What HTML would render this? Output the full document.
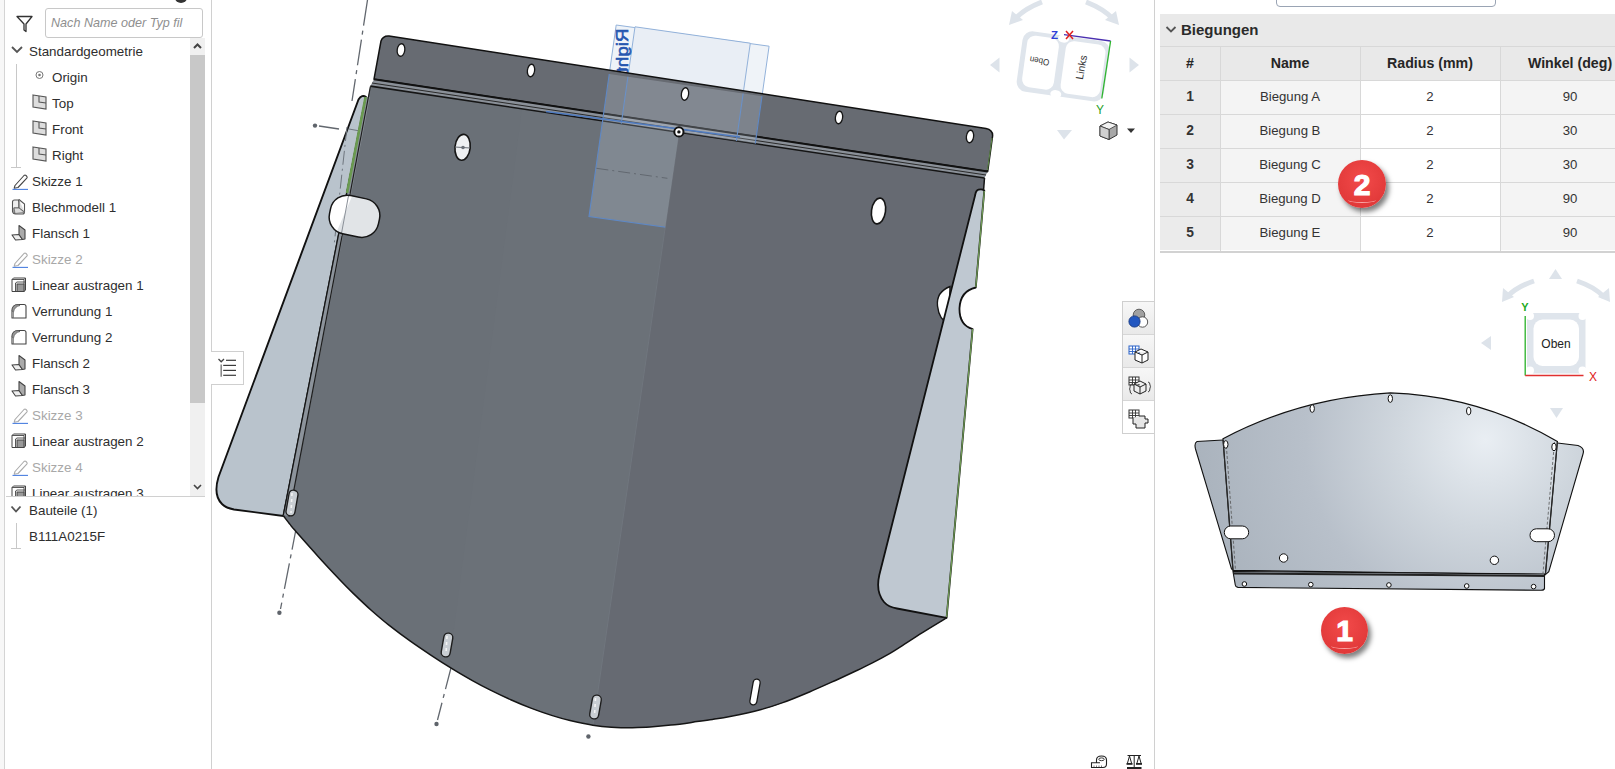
<!DOCTYPE html>
<html><head><meta charset="utf-8">
<style>
*{box-sizing:border-box;margin:0;padding:0}
html,body{width:1615px;height:769px;overflow:hidden;background:#fff;font-family:"Liberation Sans",sans-serif;color:#333}
.abs{position:absolute}
#lstrip{left:0;top:0;width:5px;height:769px;background:#f7f7f7;border-right:1px solid #d4d4d4}
#lpanel{left:6px;top:0;width:205px;height:769px;background:#fff}
#lborder{left:211px;top:0;width:1px;height:769px;background:#d0d0d0}
.row{position:absolute;left:0;height:26px;font-size:13.4px;line-height:28px;color:#2e2e2e;white-space:nowrap}
.row.dim{color:#a8a8a8}
.ico{position:absolute}
#search{left:45px;top:8px;width:158px;height:30px;border:1px solid #c8c8c8;border-radius:3px;font-style:italic;color:#8f8f8f;font-size:12.6px;line-height:29px;padding-left:5px;white-space:nowrap;overflow:hidden}
#sbar{left:190px;top:38px;width:15px;height:458px;background:#f0f0f0}
#sthumb{left:190px;top:55px;width:15px;height:348px;background:#c8c8c8}
#rborder{left:1154px;top:0;width:1px;height:769px;background:#d0d0d0}
table{border-collapse:collapse}
.tb{position:absolute;left:1160px;top:46px;border-collapse:collapse;font-size:13px}
.tb td{height:34px;border:1px solid #dcdcdc;text-align:center;color:#333}
.tb th{height:34px;border:1px solid #d6d6d6;background:#e8e8e8;font-weight:bold;font-size:13.6px;color:#262626}
.badge{position:absolute;border-radius:50%;-webkit-text-stroke:1.2px #fff;background:radial-gradient(circle at 50% 40%,#f24a4a,#e23a3a 70%,#d83434);box-shadow:3px 4px 5px rgba(0,0,0,.5);color:#fff;font-weight:bold;text-align:center}
</style></head>
<body>
<div id="lstrip" class="abs"></div>
<div id="lpanel" class="abs"></div>
<div id="lborder" class="abs"></div>

<!-- funnel -->
<svg class="abs" style="left:15px;top:14px" width="20" height="20" viewBox="0 0 20 20"><path d="M2,2.5 L17,2.5 L11,10 L11,17.5 L9,16 L9,10 Z" fill="none" stroke="#333" stroke-width="1.3" stroke-linejoin="round"/></svg>
<div id="search" class="abs">Nach Name oder Typ fil</div>
<div class="abs" style="left:175px;top:-7px;width:12px;height:10px;border-radius:50%;background:#333"></div>

<div id="sbar" class="abs"></div>
<div id="sthumb" class="abs"></div>
<svg class="abs" style="left:190px;top:38px" width="15" height="17"><path d="M4,10 L7.5,6.5 L11,10" fill="none" stroke="#444" stroke-width="2"/></svg>
<svg class="abs" style="left:190px;top:478px" width="15" height="17"><path d="M4,7 L7.5,10.5 L11,7" fill="none" stroke="#444" stroke-width="1.6"/></svg>

<div class="abs" style="left:6px;top:38px;width:184px;height:458px;overflow:hidden">
  <!-- tree -->
  <svg class="ico" style="left:4px;top:7px" width="14" height="10"><path d="M2,2 L7,7 L12,2" fill="none" stroke="#555" stroke-width="1.8"/></svg>
  <div class="row" style="left:23px;top:0">Standardgeometrie</div>
  <div class="ico" style="left:10px;top:26px;width:1px;height:104px;background:#c8c8c8"></div>
  <div class="ico" style="left:5px;top:129px;width:10px;height:1px;background:#c8c8c8"></div>
  <svg class="ico" style="left:29px;top:32px" width="10" height="10"><circle cx="4.5" cy="5" r="3.5" fill="none" stroke="#777" stroke-width="1"/><circle cx="4.5" cy="5" r="1.3" fill="#777"/></svg>
  <div class="row" style="left:46px;top:26px">Origin</div>
  <svg class="ico" style="left:26px;top:56px" width="16" height="16"><path d="M1,1 L14,3 L14,15 L1,13 Z" fill="#ddd" stroke="#555" stroke-width="1.1"/><path d="M7,2 L7,8 L14,9" fill="none" stroke="#555" stroke-width="1.1"/></svg>
  <div class="row" style="left:46px;top:52px">Top</div>
  <svg class="ico" style="left:26px;top:82px" width="16" height="16"><path d="M1,1 L14,3 L14,15 L1,13 Z" fill="#ddd" stroke="#555" stroke-width="1.1"/><path d="M7,2 L7,8 L14,9" fill="none" stroke="#555" stroke-width="1.1"/></svg>
  <div class="row" style="left:46px;top:78px">Front</div>
  <svg class="ico" style="left:26px;top:108px" width="16" height="16"><path d="M1,1 L14,3 L14,15 L1,13 Z" fill="#ddd" stroke="#555" stroke-width="1.1"/><path d="M7,2 L7,8 L14,9" fill="none" stroke="#555" stroke-width="1.1"/></svg>
  <div class="row" style="left:46px;top:104px">Right</div>

  <!-- features -->
<div class="row" style="left:26px;top:130px">Skizze 1</div>
<div class="row" style="left:26px;top:156px">Blechmodell 1</div>
<div class="row" style="left:26px;top:182px">Flansch 1</div>
<div class="row dim" style="left:26px;top:208px">Skizze 2</div>
<div class="row" style="left:26px;top:234px">Linear austragen 1</div>
<div class="row" style="left:26px;top:260px">Verrundung 1</div>
<div class="row" style="left:26px;top:286px">Verrundung 2</div>
<div class="row" style="left:26px;top:312px">Flansch 2</div>
<div class="row" style="left:26px;top:338px">Flansch 3</div>
<div class="row dim" style="left:26px;top:364px">Skizze 3</div>
<div class="row" style="left:26px;top:390px">Linear austragen 2</div>
<div class="row dim" style="left:26px;top:416px">Skizze 4</div>
<div class="row" style="left:26px;top:442px">Linear austragen 3</div>
</div>

<svg class="abs" style="left:6px;top:38px" width="184" height="458" viewBox="6 38 184 458">
<defs>
<symbol id="i-sk" viewBox="0 0 18 18"><path d="M4,13.5 L13,3.5 Q14,2.6 15,3.5 L15.8,4.3 Q16.6,5.3 15.8,6.2 L7,15.5 L3.2,16.2 Z" fill="none" stroke="currentColor" stroke-width="1.1" stroke-linejoin="round"/><line x1="1.5" y1="17.4" x2="17" y2="17.4" stroke="#4a7fe0" stroke-width="1.1"/></symbol>
<symbol id="i-bm" viewBox="0 0 18 18"><path d="M2.5,4 Q2.5,2 4.5,2 L8.5,2 L9,4.5 L9,10 L4,10 L4,14 Q4,15.5 5.5,15.5" fill="#eee" stroke="#555" stroke-width="1.1"/><path d="M9,1.5 L14.5,6 L14.5,14 Q14.5,16 12.5,16 L5.5,16 Q3,16 2.5,13.5 L2.5,4" fill="none" stroke="#555" stroke-width="1.1"/><path d="M9,1.5 L9,10 L14.5,14" fill="#ddd" stroke="#555" stroke-width="1"/><path d="M4,10 L9,10 L14.5,14.5 L5,15.5 Z" fill="#dcdcdc" stroke="#666" stroke-width="0.8"/></symbol>
<symbol id="i-fl" viewBox="0 0 18 18"><path d="M2,11.5 L9,11 L12.5,16 L5.5,16.5 Z" fill="#eee" stroke="#444" stroke-width="1.1" stroke-linejoin="round"/><path d="M9,11 L9,2 L15,6.5 L15,15.5 L12.5,16 Z" fill="#aaa" stroke="#444" stroke-width="1.1" stroke-linejoin="round"/></symbol>
<symbol id="i-la" viewBox="0 0 18 18"><path d="M2,3.5 L3.5,2 L15.5,2 L15.5,14 L14,15.5 L2,15.5 Z" fill="#fff" stroke="#444" stroke-width="1"/><path d="M2,3.5 L14,3.5 L15.5,2 M14,3.5 L14,15.5" fill="none" stroke="#444" stroke-width="0.9"/><rect x="7" y="8" width="7" height="7.5" fill="#999" stroke="#444" stroke-width="1"/><path d="M5.5,15.5 L5.5,7 L7,6 L15.5,6" fill="none" stroke="#444" stroke-width="0.9"/></symbol>
<symbol id="i-vr" viewBox="0 0 18 18"><path d="M2,16 L2,9 Q2,2.5 8.5,2.5 L14,2.5 Q16,2.5 16,4.5 L16,16 Z" fill="#fff" stroke="#444" stroke-width="1.1" stroke-linejoin="round"/><path d="M2,9 Q2,2.5 8.5,2.5 L10,3.5 Q4.5,4.5 3.5,10 Z" fill="#999" stroke="#555" stroke-width="0.7"/><path d="M3.5,10 L3.5,16" stroke="#666" stroke-width="0.7"/></symbol>
</defs>
<use href="#i-sk" x="11" y="172" width="18" height="18" color="#444"/>
<use href="#i-bm" x="10" y="198" width="18" height="18"/>
<use href="#i-fl" x="10" y="223.5" width="18" height="18"/>
<use href="#i-sk" x="11" y="250" width="18" height="18" color="#aaa"/>
<use href="#i-la" x="10" y="276" width="18" height="18"/>
<use href="#i-vr" x="10" y="302" width="18" height="18"/>
<use href="#i-vr" x="10" y="328" width="18" height="18"/>
<use href="#i-fl" x="10" y="353.5" width="18" height="18"/>
<use href="#i-fl" x="10" y="379.5" width="18" height="18"/>
<use href="#i-sk" x="11" y="406" width="18" height="18" color="#aaa"/>
<use href="#i-la" x="10" y="432" width="18" height="18"/>
<use href="#i-sk" x="11" y="458" width="18" height="18" color="#aaa"/>
<use href="#i-la" x="10" y="484" width="18" height="18"/>
</svg>
<div class="abs" style="left:6px;top:496px;width:199px;height:1px;background:#d0d0d0"></div>
<svg class="abs" style="left:10px;top:505px" width="14" height="10"><path d="M1.5,1.5 L6,6.5 L10.5,1.5" fill="none" stroke="#555" stroke-width="1.8"/></svg>
<div class="row" style="left:29px;top:497px">Bauteile (1)</div>
<div class="abs" style="left:16px;top:523px;width:1px;height:26px;background:#c8c8c8"></div>
<div class="abs" style="left:11px;top:548px;width:10px;height:1px;background:#c8c8c8"></div>
<div class="row" style="left:29px;top:523px">B111A0215F</div>

<!-- list toggle -->
<div class="abs" style="left:211px;top:351px;width:33px;height:34px;background:#fff;border:1px solid #cfcfcf;border-left:none"></div>
<svg class="abs" style="left:212px;top:352px" width="31" height="32" viewBox="212 352 31 32"><path d="M218.5,359 L221.2,361.8 L224,359" fill="none" stroke="#444" stroke-width="1.3"/><line x1="221.2" y1="364.5" x2="221.2" y2="376.8" stroke="#8a8a8a" stroke-width="1.6"/><g stroke="#3a3a3a" stroke-width="1.2"><line x1="226" y1="360.3" x2="236" y2="360.3"/><line x1="223.2" y1="365.4" x2="236" y2="365.4"/><line x1="223.2" y1="370.4" x2="236" y2="370.4"/><line x1="223.2" y1="375.3" x2="236" y2="375.3"/></g></svg>


<svg width="943" height="769" viewBox="212 0 943 769" style="position:absolute;left:212px;top:0">
<defs><clipPath id="cp3"><path d="M381,41 L986,128.5 L992.6,136 L984.5,178 L370.4,86.1 Z"/></clipPath><clipPath id="cp2"><path d="M381,41 L986,128.5 L992.6,136 L984.5,178 L370.4,86.1 Z"/><path d="M370.4,86.1 L679,132.3 L593,725.2 L593.0,725.2 C593.0,725.2 596.7,726.0 592.9,725.2 C589.1,724.4 576.8,722.1 570.0,720.5 C563.2,718.9 558.8,717.6 552.4,715.6 C546.0,713.6 538.5,711.1 531.6,708.4 C524.7,705.8 517.7,702.9 510.8,699.8 C503.9,696.7 496.4,693.1 490.0,689.9 C483.6,686.7 478.8,684.2 472.4,680.6 C466.0,677.0 458.5,672.7 451.6,668.4 C444.7,664.2 437.7,659.7 430.8,655.1 C423.9,650.5 417.0,645.9 410.0,640.9 C403.0,635.9 395.4,630.2 388.9,625.1 C382.4,620.0 377.1,615.4 371.2,610.2 C365.3,604.9 358.7,598.6 353.5,593.6 C348.3,588.5 345.9,586.1 340.0,579.9 C334.1,573.7 325.8,564.9 318.1,556.4 C310.4,548.0 298.7,534.6 294.0,529.3 C289.3,523.9 291.8,526.6 290.0,524.4 C288.2,522.2 284.6,517.4 283.5,516.0 Z"/></clipPath></defs>
<g stroke="#62676e" stroke-width="1.3" fill="none" stroke-dasharray="26,5,4,5">
<line x1="367.5" y1="0" x2="352" y2="101"/>
<line x1="297" y1="524" x2="280.5" y2="609"/>
<line x1="452" y1="664" x2="437.5" y2="720"/>
<line x1="339" y1="129" x2="319" y2="126"/>
</g>
<g fill="#5f646b"><circle cx="315" cy="125.6" r="2.2"/><circle cx="279.4" cy="612.7" r="2.2"/><circle cx="436.5" cy="724" r="2.2"/><circle cx="588.4" cy="736.5" r="2.2"/></g>
<!-- plane behind -->
<path d="M616.2,25 L769.1,46.2 L741.9,237.8 L589,216.6 Z" fill="#eff3f8" stroke="#93b2da" stroke-width="1"/>
<path d="M635,26.8 L750.3,43.2 L722.9,236.0 L607.8,218.6 Z" fill="#e9eef5" stroke="#93b2da" stroke-width="1"/>
<text transform="translate(628,28.5) rotate(90) scale(1,-1)" font-family="Liberation Sans" font-size="17" textLength="44" lengthAdjust="spacingAndGlyphs" fill="#2657b0" stroke="#2657b0" stroke-width="0.6">Right</text>
<!-- left flange -->
<path d="M366,97 Q362,94 358.5,99.5 L218.5,477 Q213,495 222,504 Q226,508 234,509.5 L283.5,516 Z" fill="#b9c3cc" stroke="#111" stroke-width="1.9" stroke-linejoin="round"/>
<line x1="362" y1="112" x2="286" y2="514" stroke="#8d949c" stroke-width="1"/>
<line x1="347" y1="127" x2="334" y2="246" stroke="#6f767e" stroke-width="1" stroke-dasharray="14,4,2,4"/><line x1="349" y1="129" x2="360" y2="131" stroke="#6f767e" stroke-width="1"/>
<!-- plate -->
<path d="M370.4,86.1 L984.5,178 L946.6,617.9 L946.6,617.9 C942.4,620.5 929.2,628.4 921.6,633.2 C914.0,638.0 906.1,643.3 900.8,646.6 C895.5,650.0 894.7,650.6 890.0,653.3 C885.3,656.0 877.9,660.0 872.4,662.8 C866.9,665.7 862.9,667.6 856.8,670.5 C850.7,673.4 843.8,676.6 836.0,680.2 C828.2,683.7 819.0,687.9 810.0,691.7 C801.0,695.5 790.1,700.0 782.0,702.9 C773.9,705.9 769.9,707.2 761.2,709.4 C752.5,711.7 738.1,714.8 730.0,716.4 C721.9,718.1 718.8,718.4 712.4,719.4 C706.0,720.4 698.5,721.4 691.6,722.4 C684.7,723.4 677.7,724.4 670.8,725.1 C663.9,725.9 656.4,726.6 650.0,727.1 C643.6,727.5 638.8,727.6 632.4,727.7 C626.0,727.7 618.2,727.6 611.6,727.2 C605.0,726.8 599.8,726.3 592.9,725.2 C586.0,724.1 576.8,722.1 570.0,720.5 C563.2,718.9 558.8,717.6 552.4,715.6 C546.0,713.6 538.5,711.1 531.6,708.4 C524.7,705.8 517.7,702.9 510.8,699.8 C503.9,696.7 496.4,693.1 490.0,689.9 C483.6,686.7 478.8,684.2 472.4,680.6 C466.0,677.0 458.5,672.7 451.6,668.4 C444.7,664.2 437.7,659.7 430.8,655.1 C423.9,650.5 417.0,645.9 410.0,640.9 C403.0,635.9 395.4,630.2 388.9,625.1 C382.4,620.0 377.1,615.4 371.2,610.2 C365.3,604.9 358.7,598.6 353.5,593.6 C348.3,588.5 345.9,586.1 340.0,579.9 C334.1,573.7 325.8,564.9 318.1,556.4 C310.4,548.0 298.7,534.6 294.0,529.3 C289.3,523.9 291.8,526.6 290.0,524.4 C288.2,522.2 284.6,517.4 283.5,516.0 Z" fill="#6a7077"/>
<path d="M522,108.8 L679,132.3 L593,725.2 L593.0,725.2 C593.0,725.2 596.7,726.0 592.9,725.2 C589.1,724.4 576.8,722.1 570.0,720.5 C563.2,718.9 558.8,717.6 552.4,715.6 C546.0,713.6 538.5,711.1 531.6,708.4 C524.7,705.8 517.7,702.9 510.8,699.8 C503.9,696.7 496.4,693.1 490.0,689.9 C483.6,686.7 478.8,684.2 472.4,680.6 C466.0,677.0 455.5,670.7 451.6,668.4 C447.7,666.1 449.4,667.0 449.0,666.7 Z" fill="#6b7178"/>
<path d="M679,132.3 L984.5,178 L946.6,617.9 L946.6,617.9 C942.4,620.5 929.2,628.4 921.6,633.2 C914.0,638.0 906.1,643.3 900.8,646.6 C895.5,650.0 894.7,650.6 890.0,653.3 C885.3,656.0 877.9,660.0 872.4,662.8 C866.9,665.7 862.9,667.6 856.8,670.5 C850.7,673.4 843.8,676.6 836.0,680.2 C828.2,683.7 819.0,687.9 810.0,691.7 C801.0,695.5 790.1,700.0 782.0,702.9 C773.9,705.9 769.9,707.2 761.2,709.4 C752.5,711.7 738.1,714.8 730.0,716.4 C721.9,718.1 718.8,718.4 712.4,719.4 C706.0,720.4 698.5,721.4 691.6,722.4 C684.7,723.4 677.7,724.4 670.8,725.1 C663.9,725.9 656.4,726.6 650.0,727.1 C643.6,727.5 638.8,727.6 632.4,727.7 C626.0,727.7 618.2,727.6 611.6,727.2 C605.0,726.8 596.1,725.5 593.0,725.2 Z" fill="#666a72"/>
<line x1="679" y1="132.3" x2="593" y2="725.2" stroke="#70767e" stroke-width="1"/>
<!-- flange & bend -->
<path d="M381,41 Q383,35.5 389,36 L986,128.5 Q993,130 992.6,136 L987.7,171.5 L374,79.2 Z" fill="#676b72" stroke="#111" stroke-width="1.5" stroke-linejoin="round"/>
<path d="M374,79.2 L987.7,171.5 L984.5,178 L370.4,86.1 Z" fill="#8a9098"/>
<line x1="374" y1="79.2" x2="987.7" y2="171.5" stroke="#111" stroke-width="2"/>
<line x1="372" y1="83" x2="986" y2="175" stroke="#2a2a2a" stroke-width="1"/>
<line x1="370.4" y1="86.1" x2="984.5" y2="178" stroke="#151515" stroke-width="1.6"/>
<!-- plane overlay -->
<g clip-path="url(#cp2)">
<path d="M616.2,25 L769.1,46.2 L741.9,237.8 L589,216.6 Z" fill="rgba(215,228,245,0.2)" stroke="#5f88c4" stroke-width="1.1"/>
</g>
<g clip-path="url(#cp3)">
<path d="M635,26.8 L750.3,43.2 L722.9,236.0 L607.8,218.6 Z" fill="rgba(215,228,245,0.06)" stroke="#6a90c6" stroke-width="1.1"/>
</g>
<line x1="546" y1="111.5" x2="740" y2="137" stroke="#4f7bc0" stroke-width="1.3"/>
<line x1="596.4" y1="168.3" x2="667.4" y2="178.3" stroke="#626870" stroke-width="1" stroke-dasharray="12,4,2,4"/>
<!-- left plate edge lines -->
<path d="M365.6,97 L369.8,97 L288.8,516.6 L283.3,514.8 Z" fill="#8c939b"/><line x1="365.6" y1="97" x2="283.3" y2="515" stroke="#151515" stroke-width="1.3"/><line x1="370.4" y1="86.5" x2="288.8" y2="516.6" stroke="#1e1e1e" stroke-width="1.2"/>
<line x1="365.6" y1="97" x2="347" y2="193" stroke="#6a9a50" stroke-width="2.6"/>
<!-- right flange -->
<path d="M950,286.5 Q936,292 937.5,306 Q939,320 949,324 Z" fill="#fff" stroke="#151515" stroke-width="1.4"/><path d="M976,286 Q958,292 959.5,308 Q961,325 973,330 L990,330 L990,286 Z" fill="#fff"/>
<path d="M984.3,190.5 Q983,189 978.5,189.6 Q975.8,190.5 975.2,195 L879.3,575 Q875.5,592 884,602 Q888.5,607.2 897,608.5 L946.6,617.9 L972.6,329 Q959,325 959.5,308 Q960.5,291 975.8,287.5 Z" fill="#bfc8d1" stroke="#111" stroke-width="1.8" stroke-linejoin="round"/>
<line x1="984.3" y1="191" x2="975.8" y2="287" stroke="#6f9a55" stroke-width="1.3"/>
<line x1="972.6" y1="329" x2="946.6" y2="617" stroke="#6f9a55" stroke-width="1.3"/>
<line x1="984.5" y1="178" x2="983.5" y2="191" stroke="#151515" stroke-width="1.5"/><line x1="992" y1="138" x2="987.5" y2="170" stroke="#6a9a50" stroke-width="0.9"/>
<path d="M946.6,617.9 L946.6,617.9 C942.4,620.5 929.2,628.4 921.6,633.2 C914.0,638.0 906.1,643.3 900.8,646.6 C895.5,650.0 894.7,650.6 890.0,653.3 C885.3,656.0 877.9,660.0 872.4,662.8 C866.9,665.7 862.9,667.6 856.8,670.5 C850.7,673.4 843.8,676.6 836.0,680.2 C828.2,683.7 819.0,687.9 810.0,691.7 C801.0,695.5 790.1,700.0 782.0,702.9 C773.9,705.9 769.9,707.2 761.2,709.4 C752.5,711.7 738.1,714.8 730.0,716.4 C721.9,718.1 718.8,718.4 712.4,719.4 C706.0,720.4 698.5,721.4 691.6,722.4 C684.7,723.4 677.7,724.4 670.8,725.1 C663.9,725.9 656.4,726.6 650.0,727.1 C643.6,727.5 638.8,727.6 632.4,727.7 C626.0,727.7 618.2,727.6 611.6,727.2 C605.0,726.8 599.8,726.3 592.9,725.2 C586.0,724.1 576.8,722.1 570.0,720.5 C563.2,718.9 558.8,717.6 552.4,715.6 C546.0,713.6 538.5,711.1 531.6,708.4 C524.7,705.8 517.7,702.9 510.8,699.8 C503.9,696.7 496.4,693.1 490.0,689.9 C483.6,686.7 478.8,684.2 472.4,680.6 C466.0,677.0 458.5,672.7 451.6,668.4 C444.7,664.2 437.7,659.7 430.8,655.1 C423.9,650.5 417.0,645.9 410.0,640.9 C403.0,635.9 395.4,630.2 388.9,625.1 C382.4,620.0 377.1,615.4 371.2,610.2 C365.3,604.9 358.7,598.6 353.5,593.6 C348.3,588.5 345.9,586.1 340.0,579.9 C334.1,573.7 325.8,564.9 318.1,556.4 C310.4,548.0 298.7,534.6 294.0,529.3 C289.3,523.9 291.8,526.6 290.0,524.4 C288.2,522.2 284.6,517.4 283.5,516.0" fill="none" stroke="#151515" stroke-width="1.5" stroke-linejoin="round"/>
<clipPath id="slotL"><path d="M200,0 L370.4,86.1 L283.5,516 L200,516 Z"/></clipPath>
<rect x="329.5" y="196.8" width="50" height="39" rx="17" transform="rotate(12 354.5 216.3)" fill="#e1e4e7"/>
<rect x="329.5" y="196.8" width="50" height="39" rx="17" transform="rotate(12 354.5 216.3)" fill="#fff" clip-path="url(#slotL)"/>
<line x1="349" y1="193" x2="341" y2="236" stroke="#8a9098" stroke-width="1"/>
<rect x="329.5" y="196.8" width="50" height="39" rx="17" transform="rotate(12 354.5 216.3)" fill="none" stroke="#151515" stroke-width="1.5"/>

<ellipse cx="401" cy="50" rx="3.8" ry="6.3" transform="rotate(8 401 50)" fill="#fff" stroke="#151515" stroke-width="1.3"/><ellipse cx="531" cy="70.5" rx="3.6" ry="6.3" transform="rotate(8 531 70.5)" fill="#fff" stroke="#151515" stroke-width="1.3"/><ellipse cx="685" cy="94" rx="3.6" ry="6.3" transform="rotate(8 685 94)" fill="#fff" stroke="#151515" stroke-width="1.3"/><ellipse cx="839" cy="117.5" rx="3.6" ry="6.3" transform="rotate(8 839 117.5)" fill="#fff" stroke="#151515" stroke-width="1.3"/><ellipse cx="970" cy="136.5" rx="3.6" ry="6.3" transform="rotate(8 970 136.5)" fill="#fff" stroke="#151515" stroke-width="1.3"/><ellipse cx="462.6" cy="147.3" rx="7.6" ry="13" transform="rotate(6 462.6 147.3)" fill="#eef0f2" stroke="#151515" stroke-width="1.6"/><line x1="455" y1="147" x2="470" y2="148" stroke="#6a6f77" stroke-width="1"/><circle cx="463" cy="147.5" r="1.8" fill="#6a6f77"/><ellipse cx="878.5" cy="211" rx="7" ry="13" transform="rotate(8 878.5 211)" fill="#fff" stroke="#151515" stroke-width="1.6"/><rect x="751.5" y="679" width="7" height="26" rx="3.5" transform="rotate(10 755 692)" fill="#fff" stroke="#151515" stroke-width="1.3"/><rect x="287.5" y="490.0" width="9" height="26" rx="4.5" transform="rotate(10 292 503)" fill="#c9ced3" stroke="#1e1e1e" stroke-width="1.4"/><line x1="292" y1="493.0" x2="291" y2="513.0" stroke="#f4f4f4" stroke-width="1.6" stroke-dasharray="3,3"/><rect x="442.5" y="633.0" width="9" height="24" rx="4.5" transform="rotate(10 447 645)" fill="#c9ced3" stroke="#1e1e1e" stroke-width="1.4"/><line x1="447" y1="636.0" x2="446" y2="654.0" stroke="#f4f4f4" stroke-width="1.6" stroke-dasharray="3,3"/><rect x="591.0" y="695.0" width="9" height="24" rx="4.5" transform="rotate(10 595.5 707)" fill="#c9ced3" stroke="#1e1e1e" stroke-width="1.4"/><line x1="595.5" y1="698.0" x2="594.5" y2="716.0" stroke="#f4f4f4" stroke-width="1.6" stroke-dasharray="3,3"/>
<circle cx="678.9" cy="131.9" r="4.6" fill="#fff" stroke="#111" stroke-width="2"/><circle cx="678.9" cy="131.9" r="1.7" fill="#111"/>
</svg>
<!-- main viewcube -->
<svg class="abs" style="left:980px;top:0" width="170" height="150" viewBox="980 0 170 150">
<g fill="none" stroke="#dde3ea" stroke-width="5">
<path d="M1042,2 Q1024,9 1015,19"/>
<path d="M1086,2 Q1104,9 1113,19"/>
</g>
<g fill="#dde3ea">
<path d="M1009,25 L1012,11 L1023,20 Z"/>
<path d="M1119,25 L1116,11 L1105,20 Z"/>
<path d="M990,65 L999.5,57.5 L999.5,72.5 Z"/>
<path d="M1139,65 L1129.5,57.5 L1129.5,72.5 Z"/>
<path d="M1064,139.5 L1057,130 L1072,130 Z"/>
</g>
<g transform="translate(0,3) rotate(8 1064 65)">
<rect x="1019" y="33" width="88" height="61" rx="10" fill="#dfe5ec"/>
<rect x="1024" y="37" width="32" height="52" rx="8" fill="#fff"/>
<rect x="1063" y="37" width="40" height="53" rx="8" fill="#fff"/>
<ellipse cx="1059.5" cy="36" rx="5.5" ry="4" fill="#fff"/><ellipse cx="1059.5" cy="92" rx="5.5" ry="4" fill="#fff"/>
</g>
<text transform="translate(1040,58) rotate(190) scale(0.9,1)" font-family="Liberation Sans" font-size="9" fill="#333" text-anchor="middle">Oben</text>
<text transform="translate(1085,68) rotate(-80)" font-family="Liberation Sans" font-size="10.5" fill="#333" text-anchor="middle">Links</text>
<line x1="1064" y1="34.7" x2="1110.6" y2="41" stroke="#4a2fb0" stroke-width="1.3"/>
<line x1="1110.6" y1="41" x2="1101.8" y2="98.5" stroke="#2db52d" stroke-width="1.3"/>
<text x="1051" y="39" font-family="Liberation Sans" font-size="11.5" font-weight="bold" fill="#2e3fd8">Z</text>
<path d="M1066,31 L1073,39 M1073,31 L1066,39" stroke="#e02020" stroke-width="1.5"/>
<text x="1096" y="114" font-family="Liberation Sans" font-size="12" fill="#1fa01f">Y</text>
<!-- small cube icon -->
<path d="M1100,126 L1108,122 L1117,125 L1117,135 L1109,139.5 L1100,136 Z" fill="#a8a8a8" stroke="#333" stroke-width="1"/>
<path d="M1100,126 L1109,129.5 L1117,125 L1108,122 Z" fill="#f2f2f2" stroke="#333" stroke-width="0.8"/>
<path d="M1109,129.5 L1109,139.5" stroke="#333" stroke-width="0.8"/>
<path d="M1100,126 L1109,129.5 L1109,139.5 L1100,136 Z" fill="#d0d0d0" stroke="#333" stroke-width="0.8"/>
<path d="M1127,128.5 L1135,128.5 L1131,133 Z" fill="#333"/>
</svg>

<!-- toolbar -->
<div class="abs" style="left:1122px;top:301px;width:33px;height:133px;border:1px solid #cfcfcf;border-right:none;background:#fff"></div>
<div class="abs" style="left:1123px;top:302px;width:32px;height:32px;background:linear-gradient(#f7f7f7,#e9e9e9)"></div>
<div class="abs" style="left:1123px;top:334px;width:32px;height:1px;background:#d6d6d6"></div>
<div class="abs" style="left:1123px;top:335px;width:32px;height:32px;background:linear-gradient(#f7f7f7,#e9e9e9)"></div>
<div class="abs" style="left:1123px;top:367px;width:32px;height:1px;background:#d6d6d6"></div>
<div class="abs" style="left:1123px;top:368px;width:32px;height:32px;background:linear-gradient(#f7f7f7,#e9e9e9)"></div>
<div class="abs" style="left:1123px;top:400px;width:32px;height:1px;background:#d6d6d6"></div>
<svg class="abs" style="left:1122px;top:301px" width="33" height="133" viewBox="1122 301 33 133">
<circle cx="1139" cy="315" r="5.8" fill="#a0a0a0" stroke="#444" stroke-width="0.8"/>
<circle cx="1142.5" cy="322" r="5.2" fill="#fff" stroke="#444" stroke-width="0.9"/>
<circle cx="1134.5" cy="321.5" r="5.6" fill="#2257c0" stroke="#1a3a80" stroke-width="0.9"/>
<!-- icon2 -->
<rect x="1129" y="346" width="10" height="8" fill="#fff" stroke="#2a62c8" stroke-width="1"/>
<path d="M1129,349 H1139 M1129,351.5 H1139 M1132.5,346 V354 M1135.5,346 V354" stroke="#2a62c8" stroke-width="0.9"/>
<path d="M1135,352 L1141,349 L1148,352 L1148,360 L1142,363 L1135,360 Z M1135,352 L1142,355 L1148,352 M1142,355 L1142,363" fill="#fff" stroke="#222" stroke-width="1"/>
<!-- icon3 -->
<rect x="1129" y="377" width="10" height="8" fill="#fff" stroke="#333" stroke-width="1"/>
<path d="M1129,380 H1139 M1129,382.5 H1139 M1132.5,377 V385 M1135.5,377 V385" stroke="#333" stroke-width="0.9"/>
<path d="M1134,384 L1140,381 L1146,384 L1146,391 L1140,394 L1134,391 Z M1134,384 L1140,387 L1146,384 M1140,387 L1140,394" fill="#eee" stroke="#222" stroke-width="1"/>
<path d="M1132,384 Q1130,384 1130,387 L1130,388 Q1129,389 1130,390 Q1130,394 1132,394 M1148,382 Q1150,382 1150,385 Q1151,387 1150,388 Q1150,392 1148,392" fill="none" stroke="#333" stroke-width="0.9"/>
<!-- icon4 -->
<rect x="1129" y="410" width="10" height="8" fill="#fff" stroke="#333" stroke-width="1"/>
<path d="M1129,413 H1139 M1129,415.5 H1139 M1132.5,410 V418 M1135.5,410 V418" stroke="#333" stroke-width="0.9"/>
<path d="M1133,418 L1133,424 L1136,424 L1136,428 L1145,428 L1145,423 L1148,423 L1148,419 L1145,419 L1145,416 L1139,416" fill="#e6e6e6" stroke="#222" stroke-width="1"/>
</svg>
<!-- bottom icons -->
<svg class="abs" style="left:1088px;top:752px" width="60" height="17" viewBox="1088 752 60 17">
<path d="M1096.5,763 L1096.5,760 Q1096.5,756 1101.5,756 Q1106.5,756 1106.5,760 L1106.5,764 Q1106.5,767.5 1103,767.5 L1091.5,767.5 L1091.5,762.8 L1100,762.8" fill="#fff" stroke="#222" stroke-width="1.1"/>
<ellipse cx="1101.5" cy="759.3" rx="2.7" ry="1.4" fill="none" stroke="#222" stroke-width="0.9"/>
<path d="M1094,767 V765.5 M1096.5,767 V765.5 M1099,767 V765.5 M1101.5,767 V765.5" stroke="#444" stroke-width="0.7"/>
<path d="M1127.5,755.5 L1141,755.5 M1134.2,755.5 L1134.2,769 M1129.5,756 L1127.5,763 M1129.5,756 L1131.5,763 M1139,756 L1137,763 M1139,756 L1141,763" stroke="#222" stroke-width="1" fill="none"/>
<rect x="1126.5" y="763" width="6" height="1.8" fill="#222"/><rect x="1136" y="763" width="6" height="1.8" fill="#222"/>
<rect x="1127" y="767" width="14.5" height="2" fill="#222"/>
</svg>

<!-- right panel view -->
<svg class="abs" style="left:1156px;top:254px" width="459" height="515" viewBox="1156 254 459 515">
<defs>
<radialGradient id="fg" cx="1485" cy="440" r="290" gradientUnits="userSpaceOnUse">
<stop offset="0" stop-color="#e9eef3"/><stop offset="0.3" stop-color="#d0d7de"/><stop offset="0.62" stop-color="#b8c0ca"/><stop offset="1" stop-color="#aab3bd"/>
</radialGradient>
</defs>
<g fill="#dde3ea">
<path d="M1555.5,269 L1549,279 L1562,279 Z"/>
<path d="M1556.5,418 L1550,408 L1563,408 Z"/>
<path d="M1481,343 L1491,336 L1491,350 Z"/>
</g>
<g fill="none" stroke="#dde3ea" stroke-width="5">
<path d="M1534,281 Q1516,287 1507,297"/>
<path d="M1577,281 Q1595,287 1604,297"/>
</g>
<g fill="#dde3ea"><path d="M1502,302 L1503,288 L1514,297 Z"/><path d="M1610,302 L1609,288 L1598,297 Z"/></g>
<rect x="1527" y="313" width="58.5" height="60.5" rx="6" fill="#dfe5ec"/>
<rect x="1533.5" y="319.5" width="45.5" height="46.5" rx="9" fill="#fff"/>
<circle cx="1530" cy="316" r="4" fill="#fff"/><circle cx="1582.5" cy="316" r="4" fill="#fff"/><circle cx="1530" cy="370.5" r="4" fill="#fff"/><circle cx="1582.5" cy="370.5" r="4" fill="#fff"/>
<text x="1556" y="347.5" font-family="Liberation Sans" font-size="12" fill="#222" text-anchor="middle">Oben</text>
<line x1="1525.2" y1="316" x2="1525.2" y2="375.5" stroke="#27b027" stroke-width="1.3"/>
<line x1="1525.2" y1="375.5" x2="1583.5" y2="375.5" stroke="#e03030" stroke-width="1.3"/>
<text x="1525" y="311" font-family="Liberation Sans" font-size="11" fill="#22aa22" text-anchor="middle" font-weight="bold">Y</text>
<text x="1589" y="381" font-family="Liberation Sans" font-size="12" fill="#e02020">X</text>
<!-- flat part -->
<path d="M1223,440 L1197,441.5 Q1194,443 1195.5,449 L1231.5,569 L1233,570" fill="url(#fg)" stroke="#111" stroke-width="1.1"/>
<path d="M1557.4,443 L1578,445.5 Q1585,448 1583,454 L1548.8,571.7 L1545.4,574.6" fill="url(#fg)" stroke="#111" stroke-width="1.1"/>
<path d="M1223,438.7 Q1300,398 1390.3,392.9 Q1480,396 1557.4,441.5 L1545.4,574.6 L1233,570.3 Z" fill="url(#fg)" stroke="#111" stroke-width="1.2"/>
<path d="M1233,571.5 L1544.5,574 L1544.5,588.5 Q1544,590.3 1541,590.3 L1238,587.4 Q1235.5,587 1235.3,585 Z" fill="url(#fg)" stroke="#111" stroke-width="1.1"/>
<line x1="1233" y1="573.5" x2="1544.5" y2="576" stroke="#222" stroke-width="2"/>
<line x1="1223" y1="440" x2="1233" y2="570.3" stroke="#2b2b2b" stroke-width="1"/>
<line x1="1226" y1="441" x2="1235.5" y2="570.3" stroke="#555" stroke-width="0.8" stroke-dasharray="3,2"/>
<line x1="1557.4" y1="441.5" x2="1545.4" y2="574.6" stroke="#2b2b2b" stroke-width="1"/>
<line x1="1554.5" y1="442" x2="1543" y2="573" stroke="#555" stroke-width="0.8" stroke-dasharray="3,2"/>
<g fill="#fff" stroke="#111" stroke-width="1">
<rect x="1224.3" y="526" width="24.4" height="12.8" rx="6.4"/>
<rect x="1530" y="528.8" width="24.5" height="12.9" rx="6.4"/>
<circle cx="1283.6" cy="558" r="4.2"/>
<circle cx="1494.4" cy="560.3" r="4.2"/>
<circle cx="1244.4" cy="584" r="2.3"/><circle cx="1310.8" cy="584.6" r="2.3"/><circle cx="1388.9" cy="585" r="2.3"/><circle cx="1466.7" cy="586" r="2.3"/><circle cx="1533.6" cy="586.6" r="2.3"/>
<ellipse cx="1225.8" cy="444.4" rx="2.2" ry="3.8"/><ellipse cx="1312.2" cy="408.6" rx="2.2" ry="3.8"/><ellipse cx="1390.3" cy="398.6" rx="2.2" ry="3.8"/><ellipse cx="1468.7" cy="411" rx="2.2" ry="3.8"/><ellipse cx="1554" cy="447" rx="2.2" ry="3.8"/>
</g>
</svg>


<div id="rborder" class="abs"></div>

<!-- right panel -->
<div class="abs" style="left:1276px;top:-10px;width:220px;height:17px;border:1px solid #9aa4b4;border-radius:0 0 4px 4px;background:#fff"></div>
<div class="abs" style="left:1160px;top:14px;width:455px;height:32px;background:#e9e9e9"></div>
<svg class="abs" style="left:1165px;top:25px" width="14" height="10"><path d="M1.5,2 L6,6.5 L10.5,2" fill="none" stroke="#555" stroke-width="1.8"/></svg>
<div class="abs" style="left:1181px;top:20px;font-size:15px;font-weight:bold;color:#2b2b2b;line-height:20px">Biegungen</div>
<div class="abs" style="left:1160px;top:46px;width:455px;height:205px;overflow:hidden"><div class="abs" style="left:0px;top:0;width:60px;height:34px;background:#e9e9e9;text-align:center;font-weight:bold;font-size:14.2px;line-height:34px;color:#262626">#</div><div class="abs" style="left:60px;top:0;width:140px;height:34px;background:#e9e9e9;text-align:center;font-weight:bold;font-size:14.2px;line-height:34px;color:#262626">Name</div><div class="abs" style="left:200px;top:0;width:140px;height:34px;background:#e9e9e9;text-align:center;font-weight:bold;font-size:14.2px;line-height:34px;color:#262626">Radius (mm)</div><div class="abs" style="left:340px;top:0;width:140px;height:34px;background:#e9e9e9;text-align:center;font-weight:bold;font-size:14.2px;line-height:34px;color:#262626">Winkel (deg)</div><div class="abs" style="left:0px;top:34px;width:60px;height:34px;background:#ebebeb;text-align:center;font-weight:bold;font-size:13.8px;line-height:34px;color:#333">1</div><div class="abs" style="left:60px;top:34px;width:140px;height:34px;background:#f4f4f4;text-align:center;font-weight:normal;font-size:13.2px;line-height:34px;color:#333">Biegung A</div><div class="abs" style="left:200px;top:34px;width:140px;height:34px;background:#ffffff;text-align:center;font-weight:normal;font-size:13.2px;line-height:34px;color:#333">2</div><div class="abs" style="left:340px;top:34px;width:140px;height:34px;background:#f4f4f4;text-align:center;font-weight:normal;font-size:13.2px;line-height:34px;color:#333">90</div><div class="abs" style="left:0px;top:68px;width:60px;height:34px;background:#ebebeb;text-align:center;font-weight:bold;font-size:13.8px;line-height:34px;color:#333">2</div><div class="abs" style="left:60px;top:68px;width:140px;height:34px;background:#f4f4f4;text-align:center;font-weight:normal;font-size:13.2px;line-height:34px;color:#333">Biegung B</div><div class="abs" style="left:200px;top:68px;width:140px;height:34px;background:#ffffff;text-align:center;font-weight:normal;font-size:13.2px;line-height:34px;color:#333">2</div><div class="abs" style="left:340px;top:68px;width:140px;height:34px;background:#f4f4f4;text-align:center;font-weight:normal;font-size:13.2px;line-height:34px;color:#333">30</div><div class="abs" style="left:0px;top:102px;width:60px;height:34px;background:#ebebeb;text-align:center;font-weight:bold;font-size:13.8px;line-height:34px;color:#333">3</div><div class="abs" style="left:60px;top:102px;width:140px;height:34px;background:#f4f4f4;text-align:center;font-weight:normal;font-size:13.2px;line-height:34px;color:#333">Biegung C</div><div class="abs" style="left:200px;top:102px;width:140px;height:34px;background:#ffffff;text-align:center;font-weight:normal;font-size:13.2px;line-height:34px;color:#333">2</div><div class="abs" style="left:340px;top:102px;width:140px;height:34px;background:#f4f4f4;text-align:center;font-weight:normal;font-size:13.2px;line-height:34px;color:#333">30</div><div class="abs" style="left:0px;top:136px;width:60px;height:34px;background:#ebebeb;text-align:center;font-weight:bold;font-size:13.8px;line-height:34px;color:#333">4</div><div class="abs" style="left:60px;top:136px;width:140px;height:34px;background:#f4f4f4;text-align:center;font-weight:normal;font-size:13.2px;line-height:34px;color:#333">Biegung D</div><div class="abs" style="left:200px;top:136px;width:140px;height:34px;background:#ffffff;text-align:center;font-weight:normal;font-size:13.2px;line-height:34px;color:#333">2</div><div class="abs" style="left:340px;top:136px;width:140px;height:34px;background:#f4f4f4;text-align:center;font-weight:normal;font-size:13.2px;line-height:34px;color:#333">90</div><div class="abs" style="left:0px;top:170px;width:60px;height:34px;background:#ebebeb;text-align:center;font-weight:bold;font-size:13.8px;line-height:34px;color:#333">5</div><div class="abs" style="left:60px;top:170px;width:140px;height:34px;background:#f4f4f4;text-align:center;font-weight:normal;font-size:13.2px;line-height:34px;color:#333">Biegung E</div><div class="abs" style="left:200px;top:170px;width:140px;height:34px;background:#ffffff;text-align:center;font-weight:normal;font-size:13.2px;line-height:34px;color:#333">2</div><div class="abs" style="left:340px;top:170px;width:140px;height:34px;background:#f4f4f4;text-align:center;font-weight:normal;font-size:13.2px;line-height:34px;color:#333">90</div><div class="abs" style="left:0;top:0px;width:455px;height:1px;background:#d8d8d8"></div><div class="abs" style="left:0;top:34px;width:455px;height:1px;background:#d8d8d8"></div><div class="abs" style="left:0;top:68px;width:455px;height:1px;background:#d8d8d8"></div><div class="abs" style="left:0;top:102px;width:455px;height:1px;background:#d8d8d8"></div><div class="abs" style="left:0;top:136px;width:455px;height:1px;background:#d8d8d8"></div><div class="abs" style="left:0;top:170px;width:455px;height:1px;background:#d8d8d8"></div><div class="abs" style="left:60px;top:0;width:1px;height:205px;background:#d8d8d8"></div><div class="abs" style="left:200px;top:0;width:1px;height:205px;background:#d8d8d8"></div><div class="abs" style="left:340px;top:0;width:1px;height:205px;background:#d8d8d8"></div></div>
<div class="abs" style="left:1160px;top:251px;width:455px;height:2px;background:#d2d2d2"></div>

<div class="badge" style="left:1338px;top:160px;width:48px;height:48px;font-size:30px;line-height:49px">2<div style="position:absolute;left:10px;top:37px;width:28px;height:6px;border-bottom:1.5px solid rgba(255,190,190,.8);border-radius:50%"></div></div>
<div class="badge" style="left:1321px;top:607px;width:47px;height:47px;font-size:30px;line-height:48px">1<div style="position:absolute;left:10px;top:36px;width:27px;height:6px;border-bottom:1.5px solid rgba(255,190,190,.8);border-radius:50%"></div></div>

</body></html>
